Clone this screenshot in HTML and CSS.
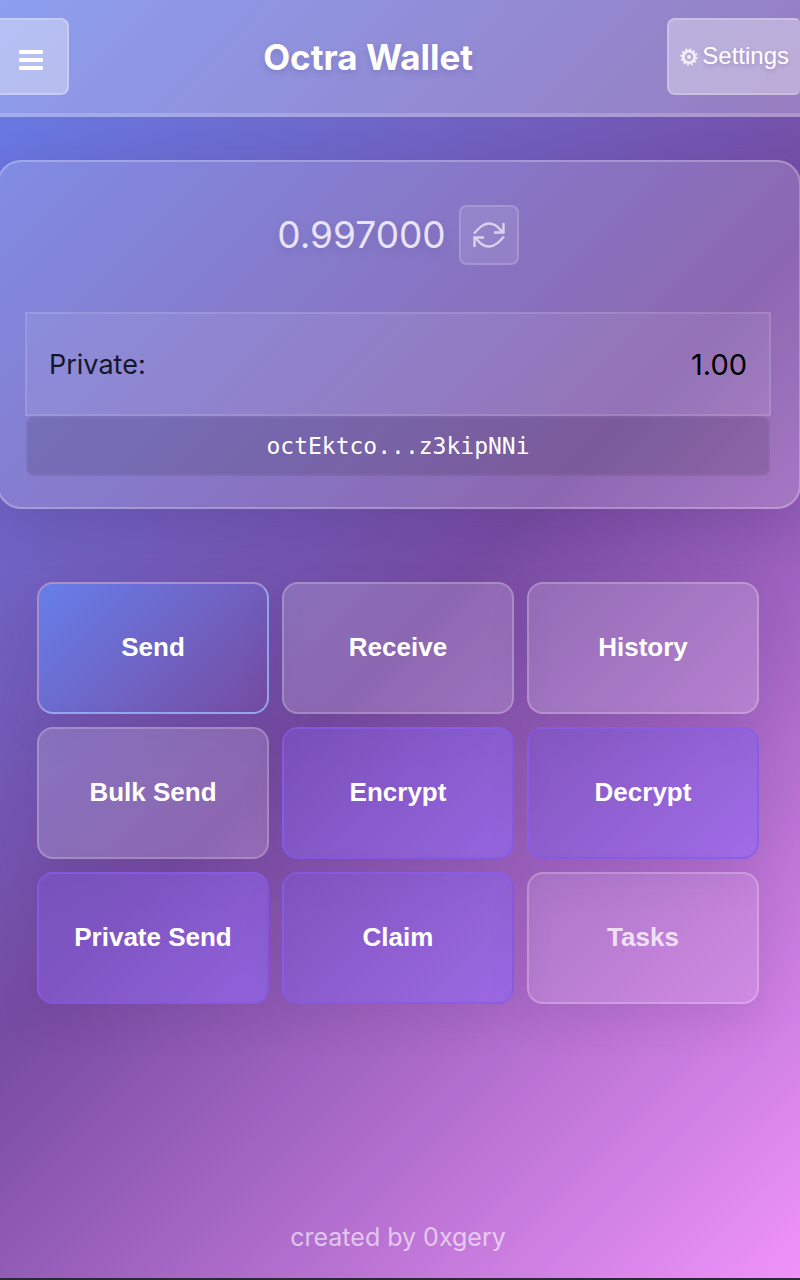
FILE: index.html
```html
<!DOCTYPE html>
<html lang="en">
<head>
<meta charset="utf-8">
<meta name="viewport" content="width=device-width, initial-scale=1">
<title>Octra Wallet</title>
<link rel="stylesheet" href="styles.css">
</head>
<body class="page">
<header class="header">
  <button class="header-btn menu-btn" type="button" aria-label="Menu">
    <svg class="menu-icon" viewBox="0 0 24 20" aria-hidden="true">
      <rect width="24" height="4" rx="1"/><rect y="8" width="24" height="4" rx="1"/><rect y="16" width="24" height="4" rx="1"/>
    </svg>
  </button>
  <h1 class="title">Octra Wallet</h1>
  <button class="header-btn settings-btn" type="button">
    <svg class="gear-icon" viewBox="0 0 18 18" fill="none" stroke="currentColor" aria-hidden="true">
      <circle cx="9" cy="9" r="5.700" stroke-width="2.600"/>
      <circle cx="9" cy="9" r="7.700" stroke-width="1.800" stroke-dasharray="2.016 2.016"/>
      <circle cx="9" cy="9" r="1.900" fill="currentColor" stroke="none"/>
    </svg>
    Settings
  </button>
</header>
<main class="main">
  <section class="card">
    <div class="balance">
      <span class="amount">0.997000</span>
      <button class="refresh-btn" type="button" aria-label="Refresh balance">
        <svg class="refresh-icon" viewBox="0 0 32 26" fill="none" stroke="currentColor" stroke-width="2.400" aria-hidden="true">
          <path d="M1 11.500C6 6 10 1.500 16 1.500C22 1.500 25 5 30 10.500M30.500 1V10.500H21"/>
          <path d="M31 14.500C26 20 22 24.500 16 24.500C10 24.500 7 21 2 15.500M1.500 25V15.500H11"/>
        </svg>
      </button>
    </div>
    <div class="private-row">
      <span class="private-label">Private:</span>
      <span class="private-value">1.00</span>
    </div>
    <div class="address">octEktco...z3kipNNi</div>
  </section>
  <nav class="actions" aria-label="Wallet actions">
    <button class="action primary" type="button">Send</button>
    <button class="action" type="button">Receive</button>
    <button class="action" type="button">History</button>
    <button class="action" type="button">Bulk Send</button>
    <button class="action violet" type="button">Encrypt</button>
    <button class="action violet" type="button">Decrypt</button>
    <button class="action violet" type="button">Private Send</button>
    <button class="action violet" type="button">Claim</button>
    <button class="action muted" type="button">Tasks</button>
  </nav>
</main>
<footer class="footer">created by 0xgery</footer>
</body>
</html>
```

FILE: styles.css
```css
* {
  box-sizing: border-box;
}

.page {
  margin: 0;
  min-height: 100vh;
  display: flex;
  flex-direction: column;
  overflow-x: hidden;
  border-bottom: 2px solid #2a2a32;
  background: linear-gradient(135deg, #667eea 0%, #764ba2 50%, #f093fb 100%);
  color: #fff;
  font-family: Inter, "Liberation Sans", sans-serif;
}

.header {
  display: flex;
  align-items: center;
  justify-content: space-between;
  padding: 18px 0;
  background: rgba(255, 255, 255, 0.25);
  border-bottom: 4px solid rgba(255, 255, 255, 0.2);
}

.header-btn {
  height: 77px;
  display: flex;
  align-items: center;
  border: 2px solid rgba(255, 255, 255, 0.22);
  background: rgba(255, 255, 255, 0.36);
  color: #fff;
  font: 24px "Liberation Sans", Arial, sans-serif;
  text-shadow: 0 2px 4px rgba(80, 60, 140, 0.25);
}

.menu-btn {
  border-left: 0;
  border-radius: 0 8px 8px 0;
  padding: 6px 24px 0 19px;
}

.menu-icon {
  width: 24px;
  height: 20px;
  fill: #fff;
}

.settings-btn {
  gap: 4px;
  padding: 0 11px 2px;
  border-right: 0;
  border-radius: 8px 5px 5px 8px;
}

.gear-icon {
  width: 18px;
  height: 18px;
  margin-top: 3px;
  opacity: 0.85;
}

.title {
  margin: 0;
  font-size: 35px;
  line-height: 40px;
  font-weight: 700;
  text-shadow: 0 3px 6px rgba(60, 50, 130, 0.2);
}

.main {
  display: flex;
  flex-direction: column;
}

.card {
  margin: 43px -1px 0 -3px;
  padding: 43px 28px 31px 26px;
  border: 2px solid rgba(255, 255, 255, 0.25);
  border-radius: 24px;
  background: rgba(255, 255, 255, 0.16);
  box-shadow: 0 16px 48px rgba(70, 40, 110, 0.2);
}

.balance {
  display: flex;
  align-items: center;
  justify-content: center;
  gap: 13px;
}

.amount {
  color: #e8e4f5;
  font-size: 37px;
  line-height: 60px;
  text-shadow: 0 4px 8px rgba(70, 50, 130, 0.2);
}

.refresh-btn {
  width: 60px;
  height: 60px;
  display: grid;
  place-items: center;
  padding: 0;
  border: 2px solid rgba(255, 255, 255, 0.16);
  border-radius: 8px;
  background: rgba(255, 255, 255, 0.1);
  color: #ddd2ee;
}

.refresh-icon {
  width: 32px;
  height: 26px;
}

.private-row {
  display: flex;
  align-items: center;
  justify-content: space-between;
  height: 104px;
  margin-top: 47px;
  padding: 0 22px;
  border: 2px solid rgba(255, 255, 255, 0.12);
  background: rgba(255, 255, 255, 0.08);
}

.private-label {
  color: #17152a;
  font-size: 27px;
}

.private-value {
  color: #000;
  font-size: 29px;
}

.address {
  margin: 0 1px;
  padding: 12px;
  border: 2px solid rgba(255, 255, 255, 0.04);
  border-radius: 8px;
  background: rgba(0, 0, 0, 0.12);
  font: 23px/32px "DejaVu Sans Mono", "Liberation Mono", monospace;
  text-align: center;
}

.actions {
  display: grid;
  grid-template-columns: repeat(3, 1fr);
  gap: 13px;
  margin: 73px 41px 0 37px;
}

.action {
  height: 132px;
  padding: 0 6px 2px;
  border: 2px solid rgba(255, 255, 255, 0.22);
  border-radius: 16px;
  background: rgba(255, 255, 255, 0.16);
  box-shadow: 0 16px 40px rgba(70, 40, 110, 0.12);
  color: #fff;
  font: bold 26px "Liberation Sans", Arial, sans-serif;
}

.primary {
  border-color: #a98fcd #94a8ee #94a8ee #a98fcd;
  background: linear-gradient(135deg, #667eea, #764ba2);
}

.violet {
  border-color: rgba(135, 90, 238, 0.6);
  background: linear-gradient(135deg, rgba(124, 84, 200, 0.6), rgba(145, 104, 240, 0.65));
}

.muted {
  background: rgba(255, 255, 255, 0.11);
  color: #f0e0f6;
}

.footer {
  margin-top: auto;
  padding: 24px 4px 25px 0;
  color: rgba(255, 255, 255, 0.62);
  font-size: 25px;
  line-height: 32px;
  text-align: center;
}
```
